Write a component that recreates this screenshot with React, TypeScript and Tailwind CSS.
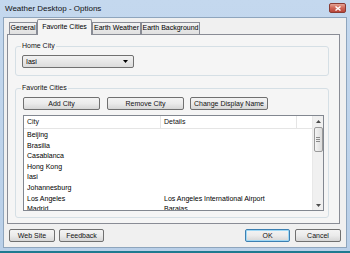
const cities: [string, string][] = [
  ["Beijing", ""],
  ["Brasilia", ""],
  ["Casablanca", ""],
  ["Hong Kong", ""],
  ["Iasi", ""],
  ["Johannesburg", ""],
  ["Los Angeles", "Los Angeles International Airport"],
  ["Madrid", "Barajas"],
];

function Btn({ label, w, def }: { label: string; w: string; def?: boolean }) {
  return (
    <div
      className={`${w} h-[13px] flex items-center justify-center rounded-[2px] border ${
        def ? "border-[#3c7fb1] shadow-[inset_0_0_0_1px_#9fd8f5]" : "border-[#707070]"
      } bg-gradient-to-b from-[#f3f3f3] via-[#ebebeb] to-[#d6d6d6] text-[7px] leading-none text-[#111]`}
    >
      {label}
    </div>
  );
}

function Tab({ label, w, active }: { label: string; w: string; active?: boolean }) {
  if (active)
    return (
      <div
        className={`${w} h-[16px] -mb-[1px] relative z-10 flex items-center justify-center border border-b-0 border-[#898c95] rounded-t-[2px] bg-[#f5f5f5] text-[7px] text-black`}
      >
        {label}
      </div>
    );
  return (
    <div
      className={`${w} h-[12px] flex items-center justify-center border border-b-0 border-[#898c95] bg-gradient-to-b from-[#f2f2f2] to-[#e0e0e0] text-[7px] text-black`}
    >
      {label}
    </div>
  );
}

function Arrow({ up }: { up?: boolean }) {
  return (
    <svg width="5" height="3" viewBox="0 0 5 3">
      <path d={up ? "M0 3 L2.5 0 L5 3 Z" : "M0 0 L2.5 3 L5 0 Z"} fill="#4d4d4d" />
    </svg>
  );
}

export default function App() {
  return (
    <div className="w-[350px] h-[253px] bg-[#1e7a90] overflow-hidden font-['Liberation_Sans',Arial,sans-serif]">
      <div className="h-[251px] flex flex-col px-[3px] bg-gradient-to-b from-[#c4d8ee] to-[#b9cfe8]">
        {/* title bar */}
        <div className="h-[17px] flex items-center justify-between pl-[2px]">
          <span className="text-[8px] text-[#111] leading-none">Weather Desktop - Options</span>
          <div className="w-[17px] h-[10px] mr-[1px] mb-[1px] rounded-[2px] border border-[#8a3b33] bg-gradient-to-b from-[#e3a395] via-[#cf6657] to-[#b8453a] flex items-center justify-center">
            <svg width="6" height="5" viewBox="0 0 6 5">
              <path d="M0.5 0.5 L5.5 4.5 M5.5 0.5 L0.5 4.5" stroke="#fff" strokeWidth="1.4" />
            </svg>
          </div>
        </div>

        {/* client */}
        <div className="flex-1 mb-[3px] border border-[#8ea5bd] bg-[#f0f0f0] flex flex-col pt-[1px]">
          <div className="h-[15px] flex items-end pl-[5px]">
            <Tab label="General" w="w-[28px]" />
            <Tab label="Favorite Cities" w="w-[55px]" active />
            <Tab label="Earth Weather" w="w-[49px]" />
            <Tab label="Earth Background" w="w-[59px]" />
          </div>

          <div className="ml-[3px] w-[333px] h-[190px] border border-[#898c95] bg-[#f5f5f5] pt-[6px] pl-[7px]">
            <fieldset className="w-[314px] border border-[#d5dfe5] rounded-[3px] pl-[6px] pb-[7px]">
              <legend className="-ml-[1px] px-[1px] text-[7px] leading-[10px] text-[#111]">Home City</legend>
              <div className="mt-[4px] w-[112px] h-[13px] rounded-[2px] border border-[#707070] bg-gradient-to-b from-[#f2f2f2] to-[#dcdcdc] flex items-center justify-between pl-[3px] pr-[5px]">
                <span className="text-[7px] leading-none text-black">Iasi</span>
                <svg width="5" height="3" viewBox="0 0 5 3">
                  <path d="M0 0 L2.5 3 L5 0 Z" fill="#000" />
                </svg>
              </div>
            </fieldset>

            <fieldset className="mt-[7px] w-[314px] border border-[#d5dfe5] rounded-[3px] pl-[7px] pb-[6px]">
              <legend className="-ml-[2px] px-[1px] text-[7px] leading-[10px] text-[#111]">Favorite Cities</legend>
              <div className="mt-[4px] flex gap-[7px]">
                <Btn label="Add City" w="w-[77px]" />
                <Btn label="Remove City" w="w-[77px]" />
                <div className="-ml-[1px]">
                  <Btn label="Change Display Name" w="w-[78px]" />
                </div>
              </div>

              <div className="mt-[5px] w-[301px] h-[96px] border border-[#828790] bg-white flex overflow-hidden">
                <div className="flex-1 flex flex-col">
                  <div className="h-[13px] shrink-0 flex border-b border-[#e5e5e5] text-[7px] text-[#111]">
                    <div className="w-[137px] pl-[3px] flex items-center border-r border-[#e5e5e5]">City</div>
                    <div className="w-[136px] pl-[3px] flex items-center border-r border-[#e5e5e5]">Details</div>
                    <div className="flex-1" />
                  </div>
                  <div className="pt-[1px]">
                    {cities.map(([c, d]) => (
                      <div key={c} className="h-[10.6px] flex items-center text-[7px] text-black">
                        <div className="w-[137px] pl-[3px]">{c}</div>
                        <div className="pl-[3px]">{d}</div>
                      </div>
                    ))}
                  </div>
                </div>
                <div className="w-[11px] shrink-0 bg-[#f0f0f0] flex flex-col items-center border-l border-[#e8e8e8]">
                  <div className="h-[10px] w-full flex items-center justify-center">
                    <Arrow up />
                  </div>
                  <div className="mt-[1px] w-[9px] h-[25px] rounded-[2px] border border-[#9a9a9a] bg-gradient-to-r from-[#f4f4f4] to-[#dcdcdc] flex flex-col items-center justify-center gap-[1px]">
                    <div className="w-[4px] h-px bg-[#8a8a8a]" />
                    <div className="w-[4px] h-px bg-[#8a8a8a]" />
                    <div className="w-[4px] h-px bg-[#8a8a8a]" />
                  </div>
                  <div className="flex-1" />
                  <div className="h-[10px] w-full flex items-center justify-center">
                    <Arrow />
                  </div>
                </div>
              </div>
            </fieldset>
          </div>

          <div className="mt-[5px] flex items-center px-[5px]">
            <Btn label="Web Site" w="w-[46px]" />
            <div className="ml-[4px]">
              <Btn label="Feedback" w="w-[45px]" />
            </div>
            <div className="flex-1" />
            <Btn label="OK" w="w-[45px]" def />
            <div className="ml-[5px]">
              <Btn label="Cancel" w="w-[46px]" />
            </div>
          </div>
        </div>
      </div>
    </div>
  );
}
